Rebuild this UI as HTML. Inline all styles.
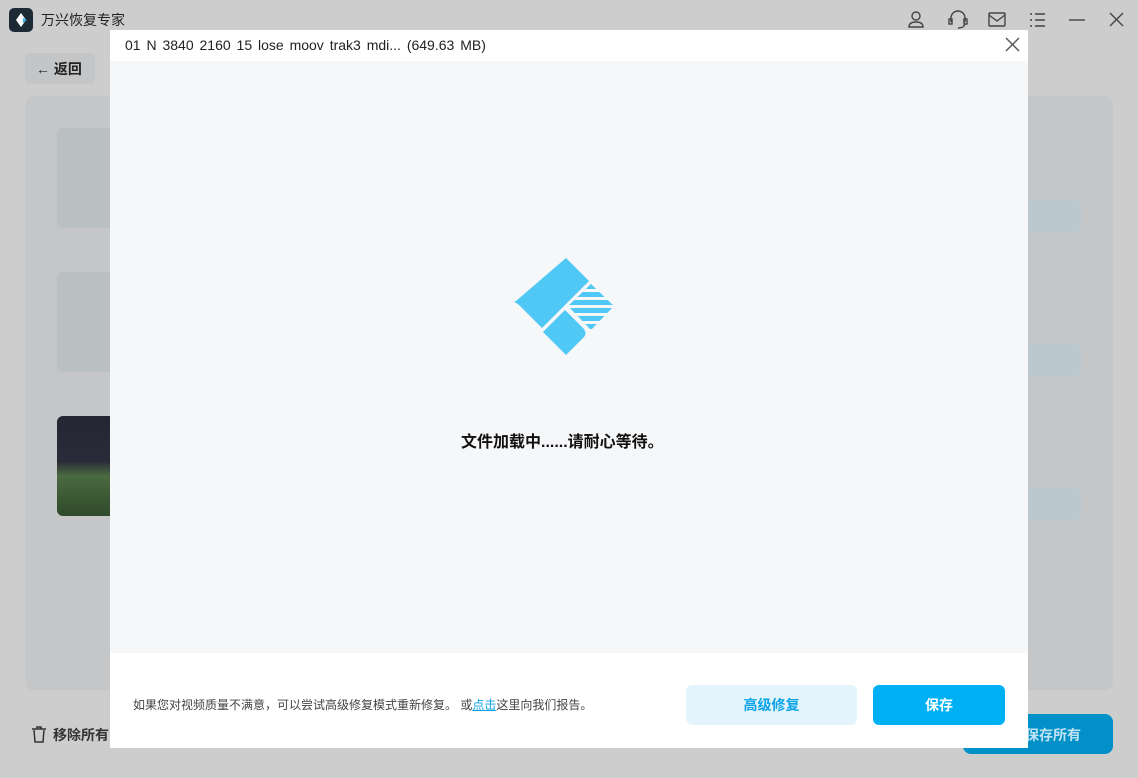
<!DOCTYPE html>
<html><head><meta charset="utf-8"><style>
*{margin:0;padding:0;box-sizing:border-box}
body{width:1138px;height:778px;position:relative;overflow:hidden;background:#cdcdcd;font-family:"Liberation Sans","Noto Sans CJK SC",sans-serif;}
.a{position:absolute}
</style></head><body>
<div class="a" style="left:9px;top:8px;width:24px;height:24px;background:#1d2a36;border-radius:5px"></div>
<svg class="a" style="left:9px;top:8px" width="24" height="24" viewBox="0 0 24 24"><path d="M12 5 L7 12 L12 19 L17 12Z" fill="#fff"/><path d="M14 10 L18 12 L14 15Z" fill="#3aaee0"/></svg>
<div class="a" style="left:41px;top:10px;font-size:14px;color:#222">万兴恢复专家</div>
<svg class="a" style="left:900px;top:8px" width="240" height="24" viewBox="0 0 240 24" fill="none" stroke="#444" stroke-width="1.4">
<circle cx="16" cy="8" r="4"/><path d="M9 19 Q9 14 16 14 Q23 14 23 19Z"/>
<path d="M51 14 V10 A7 7 0 0 1 65 10 V14"/><rect x="49" y="11" width="3" height="5"/><rect x="64" y="11" width="3" height="5"/><path d="M65 16 Q64 20 58 20"/>
<rect x="89" y="5" width="16" height="13" rx="1"/><path d="M89 7 L97 13 L105 7"/>
<path d="M130 6h2M130 12h2M130 18h2M135 6h10M135 12h10M135 18h10"/>
<path d="M169 12h16"/><path d="M210 5l13 13M223 5l-13 13"/>
</svg>
<div class="a" style="left:25px;top:53px;width:70px;height:31px;background:#c4c5c7;border-radius:5px"></div>
<div class="a" style="left:36px;top:59px;font-size:14px;font-weight:bold;color:#222">&larr; 返回</div>
<div class="a" style="left:25px;top:96px;width:1088px;height:594px;background:#c5c6c8;border-radius:8px"></div>
<div class="a" style="left:57px;top:128px;width:60px;height:100px;background:#babfc2;border-radius:6px"></div>
<div class="a" style="left:57px;top:272px;width:60px;height:100px;background:#babfc2;border-radius:6px"></div>
<div class="a" style="left:57px;top:416px;width:60px;height:100px;background:linear-gradient(#262533 0%,#2a2a38 45%,#4a6a40 60%,#2f4a2a 100%);border-radius:6px"></div>
<div class="a" style="left:1010px;top:200px;width:71px;height:32px;background:#bcc8d0;border-radius:6px"></div>
<div class="a" style="left:1010px;top:344px;width:71px;height:32px;background:#bcc8d0;border-radius:6px"></div>
<div class="a" style="left:1010px;top:488px;width:71px;height:32px;background:#bcc8d0;border-radius:6px"></div>
<svg class="a" style="left:31px;top:726px" width="16" height="18" fill="none" stroke="#333" stroke-width="1.5"><path d="M1 3h14M6 3V1h4v2M3 4l1 12h8l1-12"/></svg>
<div class="a" style="left:53px;top:725px;font-size:14px;font-weight:bold;color:#333">移除所有</div>
<div class="a" style="left:963px;top:714px;width:150px;height:40px;background:#0190c8;border-radius:8px;color:#bfe3f3;font-size:14px;font-weight:bold;padding:11px 0 0 62px">保存所有</div>
<!-- modal -->
<div class="a" style="left:110px;top:30px;width:918px;height:718px;background:#fff"></div>
<div class="a" style="left:110px;top:61px;width:918px;height:592px;background:#f6f7f9"></div>
<div class="a" style="left:125px;top:37px;font-size:14px;color:#222;word-spacing:2px">01 N 3840 2160 15 lose moov trak3 mdi... (649.63 MB)</div>
<svg class="a" style="left:1005px;top:37px" width="15" height="15" stroke="#555" stroke-width="1.4"><path d="M1 1l13 13M14 1L1 14"/></svg>
<svg class="a" style="left:505px;top:250px" width="120" height="115" viewBox="505 250 120 115">
<path d="M566 258 L589 281 L542 328 L520 306 Q517 303 514 302 L516 301Z" fill="#4fc8f5"/>
<path d="M543 332 L565 310 L584 329 Q587 334 584 337 L566 355Z" fill="#4fc8f5"/>
<defs><clipPath id="c"><path d="M591 284 L614 306 L591 330 L568 306Z"/></clipPath></defs>
<g clip-path="url(#c)" fill="#4fc8f5"><rect x="560" y="284" width="60" height="5"/><rect x="560" y="292" width="60" height="5"/><rect x="560" y="300" width="60" height="5"/><rect x="560" y="308" width="60" height="5"/><rect x="560" y="316" width="60" height="5"/><rect x="560" y="324" width="60" height="5"/></g>
</svg>
<div class="a" style="left:461px;top:428px;font-size:16px;font-weight:bold;color:#111">文件加载中......请耐心等待。</div>
<div class="a" style="left:133px;top:696px;font-size:12px;color:#444">如果您对视频质量不满意，可以尝试高级修复模式重新修复。 或<span style="color:#0aa3e8;text-decoration:underline">点击</span>这里向我们报告。</div>
<div class="a" style="left:686px;top:685px;width:171px;height:40px;background:#e4f4fc;border-radius:6px;color:#0aa3e8;font-size:14px;font-weight:bold;text-align:center;line-height:40px">高级修复</div>
<div class="a" style="left:873px;top:685px;width:132px;height:40px;background:#00b0f5;border-radius:6px;color:#fff;font-size:14px;font-weight:bold;text-align:center;line-height:40px">保存</div>
</body></html>
